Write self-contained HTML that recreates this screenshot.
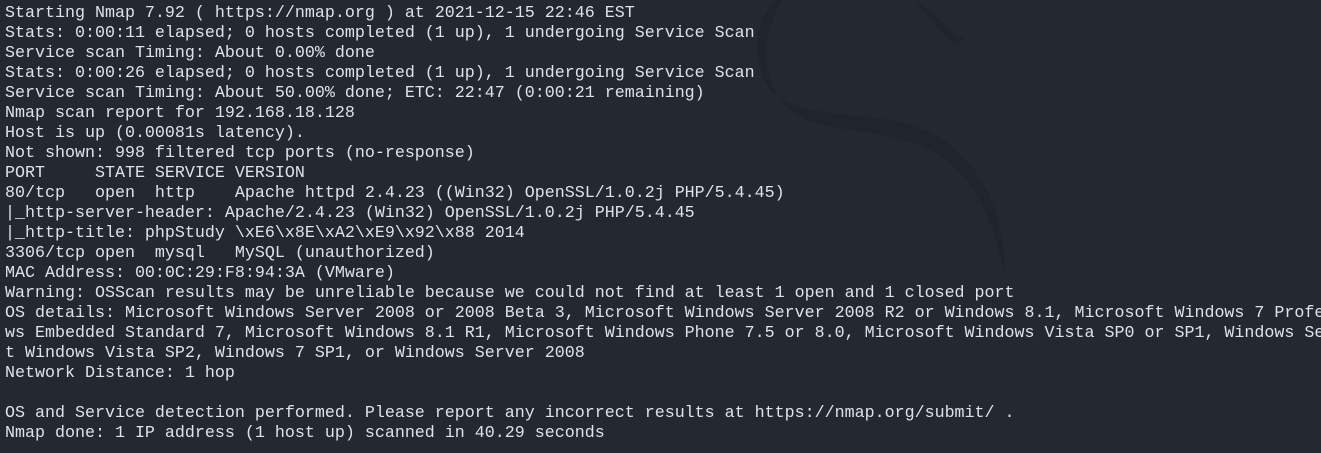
<!DOCTYPE html>
<html><head><meta charset="utf-8"><style>
html,body{margin:0;padding:0;}
body{width:1321px;height:453px;overflow:hidden;background:#242831;position:relative;}
svg{position:absolute;left:0;top:0;}
pre{position:absolute;left:5px;top:4px;width:1316px;overflow:hidden;margin:0;font-family:"Liberation Mono",monospace;font-size:16.67px;line-height:20px;color:#dfe2e7;white-space:pre;}
</style></head><body>
<svg width="1321" height="453" viewBox="0 0 1321 453">
<path d="M775 0 C755 20 750 60 770 90 C800 120 860 110 910 125 C960 140 990 180 1000 230 C1005 250 1006 260 1003 270 C995 220 970 170 930 150 C880 125 820 135 790 110 C760 85 760 40 782 0 Z" fill="#20242b"/>
<path d="M915 0 C930 10 945 25 955 35 L967 38 L955 45 C940 30 925 15 915 0 Z" fill="#20242b"/>
</svg>
<pre>Starting Nmap 7.92 ( https://nmap.org ) at 2021-12-15 22:46 EST
Stats: 0:00:11 elapsed; 0 hosts completed (1 up), 1 undergoing Service Scan
Service scan Timing: About 0.00% done
Stats: 0:00:26 elapsed; 0 hosts completed (1 up), 1 undergoing Service Scan
Service scan Timing: About 50.00% done; ETC: 22:47 (0:00:21 remaining)
Nmap scan report for 192.168.18.128
Host is up (0.00081s latency).
Not shown: 998 filtered tcp ports (no-response)
PORT     STATE SERVICE VERSION
80/tcp   open  http    Apache httpd 2.4.23 ((Win32) OpenSSL/1.0.2j PHP/5.4.45)
|_http-server-header: Apache/2.4.23 (Win32) OpenSSL/1.0.2j PHP/5.4.45
|_http-title: phpStudy \xE6\x8E\xA2\xE9\x92\x88 2014
3306/tcp open  mysql   MySQL (unauthorized)
MAC Address: 00:0C:29:F8:94:3A (VMware)
Warning: OSScan results may be unreliable because we could not find at least 1 open and 1 closed port
OS details: Microsoft Windows Server 2008 or 2008 Beta 3, Microsoft Windows Server 2008 R2 or Windows 8.1, Microsoft Windows 7 Professional or Windows 8
ws Embedded Standard 7, Microsoft Windows 8.1 R1, Microsoft Windows Phone 7.5 or 8.0, Microsoft Windows Vista SP0 or SP1, Windows Server 2008 SP1, or
t Windows Vista SP2, Windows 7 SP1, or Windows Server 2008
Network Distance: 1 hop

OS and Service detection performed. Please report any incorrect results at https://nmap.org/submit/ .
Nmap done: 1 IP address (1 host up) scanned in 40.29 seconds</pre>
</body></html>
